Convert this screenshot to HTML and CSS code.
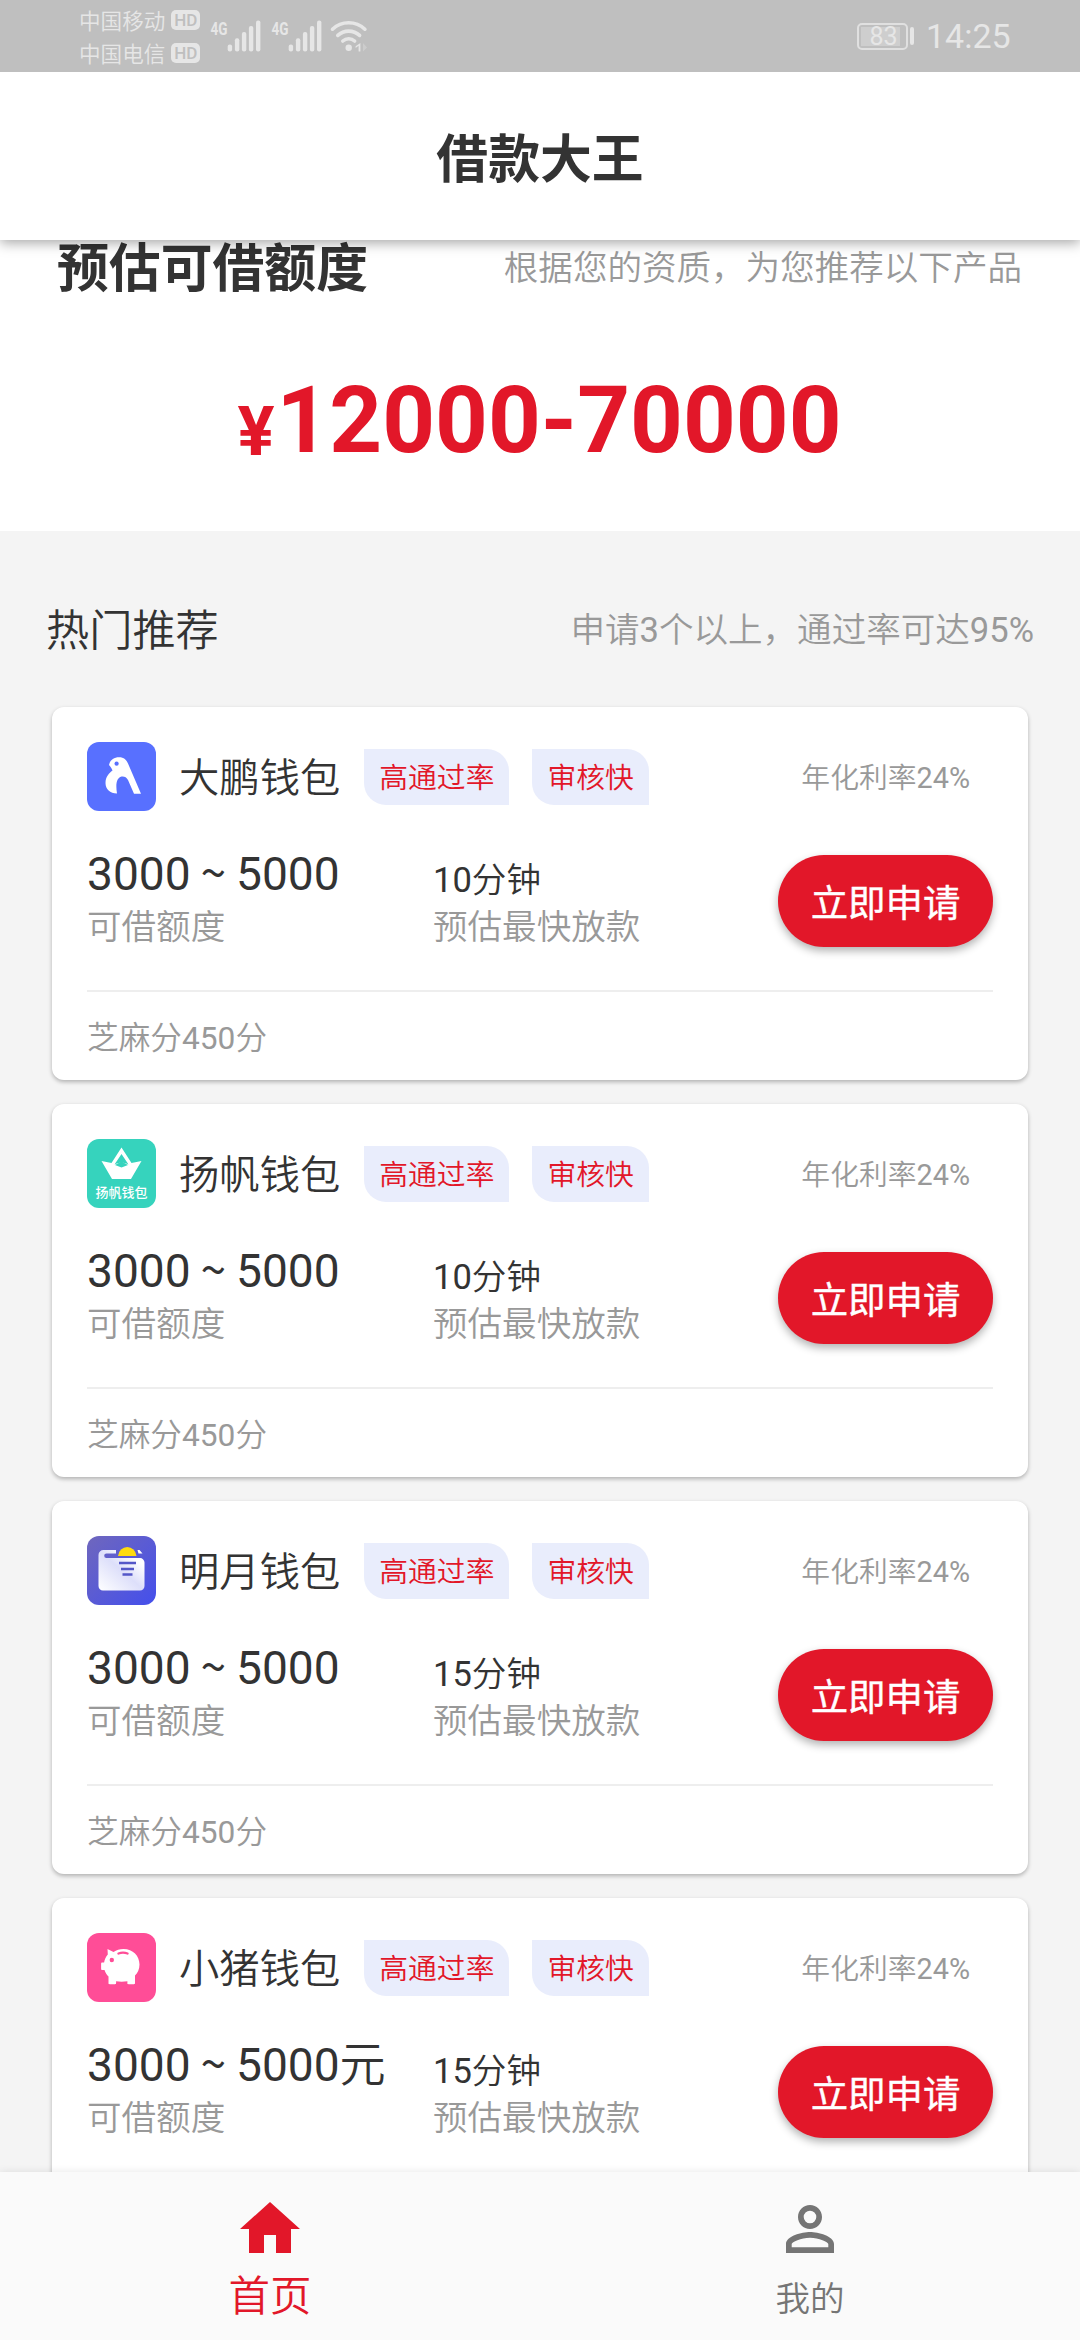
FILE: index.html
```html
<!DOCTYPE html>
<html lang="zh-CN">
<head>
<meta charset="utf-8">
<title>借款大王</title>
<link rel="stylesheet" href="styles.css">
</head>
<body>
<div class="app">
  <div class="status">
    <div class="carriers">
      <div class="carrier">中国移动<span class="hd">HD</span></div>
      <div class="carrier">中国电信<span class="hd">HD</span></div>
    </div>
    <svg class="signals" width="166" height="72" viewBox="0 0 166 72">
      <text class="net" x="5.5" y="35" textLength="17" lengthAdjust="spacingAndGlyphs">4G</text>
      <text class="net" x="66.5" y="35" textLength="17" lengthAdjust="spacingAndGlyphs">4G</text>
      <g fill="currentColor">
        <g id="bars">
          <rect x="22.7" y="44.5" width="4.4" height="7" rx="2"/>
          <rect x="29.9" y="38.3" width="4.4" height="13.2" rx="2"/>
          <rect x="36.9" y="32" width="4.4" height="19.5" rx="2"/>
          <rect x="43.9" y="26" width="4.4" height="25.5" rx="2"/>
          <rect x="51" y="20.5" width="4.4" height="31" rx="2"/>
        </g>
        <use href="#bars" x="61"/>
        <circle cx="143.7" cy="47.7" r="3.2"/>
        <path d="M155.400 43v8.500h-1.800v-5.800l-3 2.300v-1.800z"/>
        <path d="M158 43l4 4.500-4 4z" opacity=".35"/>
      </g>
      <g fill="none" stroke="currentColor" stroke-width="3.6" stroke-linecap="round">
        <path d="M127.5 29.2a23.5 23.5 0 0 1 32.4 0"/>
        <path d="M132.8 35.4a16 16 0 0 1 21.8 0"/>
        <path d="M137.8 41a9 9 0 0 1 11.8 0"/>
      </g>
    </svg>
    <div class="battery"><span class="level">83</span></div>
    <div class="tip"></div>
    <div class="clock">14:25</div>
  </div>
  <header class="header">借款大王</header>
  <main class="main">
    <section class="quota">
      <div class="quota-head">
        <h2 class="quota-title">预估可借额度</h2>
        <span class="note">根据您的资质，为您推荐以下产品</span>
      </div>
      <div class="amount"><span class="yen">¥</span>12000-70000</div>
    </section>
    <div class="hot">
      <h3 class="hot-title">热门推荐</h3>
      <span class="note">申请<b>3</b>个以上，通过率可达<b>95%</b></span>
    </div>
    <div class="list">
      <article class="card">
        <div class="top">
          <svg class="logo" viewBox="0 0 69 69"><rect width="69" height="69" rx="12" fill="#5870ff"/><path d="M22 23C23 18 27 15.300 32 15.300c5 0 7.500 2.700 9 6.200l13 30.200h-7L41 38c-1.500-3-4-4-6.500-3.500-5 1.500-6 7.500-4.500 17-7 0-11.500-4.500-11.500-10.500s3.500-10 7-12.500c-1-2-1.500-3.500-3.500-5.500z" fill="#fff"/><circle cx="29.600" cy="21.700" r="2.100" fill="#5870ff"/></svg>
          <span class="name">大鹏钱包</span><span class="tag">高通过率</span><span class="tag">审核快</span><span class="rate">年化利率<b>24%</b></span>
        </div>
        <div class="mid">
          <div class="limit"><div class="range">3000 <i class="to">~</i> 5000</div><div class="label">可借额度</div></div>
          <div class="speed"><div class="time"><b>10</b>分钟</div><div class="label">预估最快放款</div></div>
          <button class="apply">立即申请</button>
        </div>
        <div class="foot">芝麻分<b>450</b>分</div>
      </article>
      <article class="card">
        <div class="top">
          <svg class="logo" viewBox="0 0 69 69"><rect width="69" height="69" rx="12" fill="#36d3bd"/><path fill-rule="evenodd" d="M14.500 22l10 2L34.500 8.500 44.500 24l10-2-10.500 18H25zM27.500 25.500c4-2.500 10-2.500 14 0L34.500 15z" fill="#fff"/><path d="M28 26l6.500-3.500L41 26l-6.500 2.500z" fill="#36d3bd"/><text x="34.500" y="58" text-anchor="middle" class="logo-text">扬帆钱包</text></svg>
          <span class="name">扬帆钱包</span><span class="tag">高通过率</span><span class="tag">审核快</span><span class="rate">年化利率<b>24%</b></span>
        </div>
        <div class="mid">
          <div class="limit"><div class="range">3000 <i class="to">~</i> 5000</div><div class="label">可借额度</div></div>
          <div class="speed"><div class="time"><b>10</b>分钟</div><div class="label">预估最快放款</div></div>
          <button class="apply">立即申请</button>
        </div>
        <div class="foot">芝麻分<b>450</b>分</div>
      </article>
      <article class="card">
        <div class="top">
          <svg class="logo" viewBox="0 0 69 69"><defs><linearGradient id="moon" x1="0" y1="0" x2="1" y2="1"><stop offset="0" stop-color="#6f67bd"/><stop offset="1" stop-color="#444fec"/></linearGradient><linearGradient id="bag" x1="1" y1="0" x2="0" y2="1"><stop offset=".2" stop-color="#fff"/><stop offset=".5" stop-color="#dddffa"/><stop offset="1" stop-color="#fff"/></linearGradient></defs><rect width="69" height="69" rx="12" fill="url(#moon)"/><path d="M16.500 14H29v3.500H19.500a2.300 2.300 0 0 0 0 4.600H53a4.500 4.500 0 0 1 4.500 4.500V50a4.500 4.500 0 0 1-4.500 4.500H16a4.500 4.500 0 0 1-4.500-4.500V19a5 5 0 0 1 5-5zM50.500 14h2l3 3.500h-4z" fill="url(#bag)"/><path d="M31 20a9.300 10 0 0 1 18.500 0z" fill="#ffdc0e"/><path d="M32 27h17M34 33h13M35.500 38.500h10" stroke="#5457c8" stroke-width="2.500"/></svg>
          <span class="name">明月钱包</span><span class="tag">高通过率</span><span class="tag">审核快</span><span class="rate">年化利率<b>24%</b></span>
        </div>
        <div class="mid">
          <div class="limit"><div class="range">3000 <i class="to">~</i> 5000</div><div class="label">可借额度</div></div>
          <div class="speed"><div class="time"><b>15</b>分钟</div><div class="label">预估最快放款</div></div>
          <button class="apply">立即申请</button>
        </div>
        <div class="foot">芝麻分<b>450</b>分</div>
      </article>
      <article class="card">
        <div class="top">
          <svg class="logo" viewBox="0 0 69 69"><rect width="69" height="69" rx="12" fill="#ff4d97"/><path d="M20.500 16l6 3c3-2 6-3 10-3C46 16 52.500 23 52.500 31.500c0 5-2 8.500-4.500 11V50c0 .8-.4 1.200-1.200 1.200h-5.200c-.8 0-1.200-.4-1.200-1.200v-1.700c-4 .6-7.500.6-11.300 0V50c0 .8-.4 1.200-1.200 1.200h-5.200c-.8 0-1.200-.4-1.200-1.200v-6.500c-1.700-1.700-3-3.700-4-6.500h-2.200c-.8 0-1.200-.4-1.200-1.200v-5c0-.8.400-1.200 1.200-1.200h1.800c.5-3.200 1.700-5.700 3.700-8z" fill="#fff"/><circle cx="24.800" cy="27" r="2.200" fill="#ff4d97"/><path d="M31.500 20.500c3-1.200 6-1.200 9 0" fill="none" stroke="#ff4d97" stroke-width="2.400" stroke-linecap="round"/></svg>
          <span class="name">小猪钱包</span><span class="tag">高通过率</span><span class="tag">审核快</span><span class="rate">年化利率<b>24%</b></span>
        </div>
        <div class="mid">
          <div class="limit"><div class="range">3000 <i class="to">~</i> 5000<i class="unit">元</i></div><div class="label">可借额度</div></div>
          <div class="speed"><div class="time"><b>15</b>分钟</div><div class="label">预估最快放款</div></div>
          <button class="apply">立即申请</button>
        </div>
      </article>
    </div>
  </main>
  <nav class="nav">
    <a class="tab active"><svg width="72" height="72" viewBox="0 0 24 24" fill="currentColor"><path d="M10 20v-6h4v6h5v-8h3L12 3 2 12h3v8z"/></svg><span>首页</span></a>
    <a class="tab"><svg width="72" height="72" viewBox="0 0 24 24" fill="currentColor"><path d="M12 5.900a2.100 2.100 0 1 1 0 4.200 2.100 2.100 0 0 1 0-4.200m0 9c2.970 0 6.100 1.460 6.100 2.100v1.100H5.900V17c0-.64 3.130-2.100 6.100-2.100M12 4C9.790 4 8 5.790 8 8s1.790 4 4 4 4-1.790 4-4-1.790-4-4-4zm0 9c-2.670 0-8 1.340-8 4v3h16v-3c0-2.660-5.330-4-8-4z"/></svg><span>我的</span></a>
  </nav>
</div>
</body>
</html>
```
FILE: styles.css
```css
* { box-sizing: border-box; }
body {
  margin: 0;
  font-family: Roboto, "Noto Sans CJK SC", sans-serif;
  font-weight: 350;
  color: #333;
}
b { font-weight: 400; }
i { font-style: normal; font-family: "Noto Sans CJK SC", sans-serif; line-height: 1; }
h2, h3 { margin: 0; }
.app {
  width: 1080px;
  height: 2340px;
  overflow: hidden;
  display: flex;
  flex-direction: column;
  background: #f4f4f4;
}

/* status bar */
.status {
  flex: none;
  position: relative;
  z-index: 2;
  height: 72px;
  background: #bfbfbf;
  color: #e6e6e6;
  display: flex;
  align-items: center;
  padding-left: 79px;
}
.carriers { width: 126px; display: flex; flex-direction: column; gap: 1px; }
.carrier { display: flex; align-items: center; height: 32px; font-size: 21.6px; white-space: nowrap; }
.hd {
  width: 29px;
  height: 20px;
  margin-left: 6px;
  border-radius: 5px;
  background: #e6e6e6;
  color: #bfbfbf;
  font: 500 17px/20px Roboto, sans-serif;
  text-align: center;
}
.net { font: 700 19px Roboto, sans-serif; fill: currentColor; }
.battery {
  width: 51px;
  height: 27px;
  margin-left: 486px;
  padding: 2px;
  border: 2px solid #e0e0e0;
  border-radius: 5px;
}
.level {
  display: block;
  width: 39px;
  height: 19px;
  background: #cecece;
  font: 400 25px/19px Roboto, sans-serif;
  text-align: center;
  padding-left: 6px;
}
.tip { width: 4px; height: 18px; margin-left: 2px; border-radius: 2px; background: #e6e6e6; }
.clock { margin-left: 12px; font: 400 34px/40px Roboto, sans-serif; }

/* title bar */
.header {
  flex: none;
  position: relative;
  z-index: 1;
  height: 168px;
  background: #fff;
  box-shadow: 0 3px 12px rgba(0, 0, 0, .35);
  font-size: 51.84px;
  font-weight: 700;
  line-height: 178px;
  text-align: center;
}

/* quota */
.main { flex: 1; min-height: 0; overflow: hidden; }
.quota { height: 291px; background: #fff; }
.quota-head {
  display: flex;
  justify-content: space-between;
  align-items: flex-start;
  height: 57px;
  padding: 0 58px 0 57px;
}
.quota-title { font-size: 51.84px; line-height: 60px; }
.note { font-size: 34.56px; color: #999; line-height: 40px; }
.quota-head .note { margin-top: 8px; }
.amount {
  margin-top: 70px;
  padding-right: 1px;
  font-size: 92.16px;
  font-weight: 700;
  line-height: 108px;
  text-align: center;
  color: #e21729;
}
.yen { margin-right: 2px; font-size: 69.12px; position: relative; top: 3px; }

.hot {
  display: flex;
  justify-content: space-between;
  align-items: center;
  height: 176px;
  padding: 22px 46px 0 46px;
}
.hot-title { margin-top: -6px; font-size: 43.2px; font-weight: 350; }

/* product cards */
.list { display: flex; flex-direction: column; gap: 24px; padding: 0 52px; }
.card {
  flex: none;
  height: 373px;
  padding: 35px 35px 0;
  border-radius: 12px;
  background: #fff;
  box-shadow: 0 2px 4px rgba(0, 0, 0, .28);
}
.top { display: flex; align-items: center; height: 69px; }
.logo { width: 69px; height: 69px; flex: none; }
.logo-text { font: 500 13px "Noto Sans CJK SC", sans-serif; fill: #fff; }
.name { margin: -4px 1px 0 23px; font-size: 40.32px; }
.tag {
  height: 56px;
  margin-left: 23px;
  padding: 0 15px;
  border-radius: 0 22px 0 22px;
  background: #e9edfc;
  color: #e21729;
  font-size: 28.8px;
  line-height: 58px;
}
.rate { margin: -2px 0 0 auto; padding-right: 23px; font-size: 28.8px; color: #999; }
.mid { display: flex; height: 146px; }
.limit { width: 346px; }
.range { height: 56px; margin-top: 35px; font-size: 46.08px; font-weight: 400; line-height: 56px; white-space: nowrap; }
.to { margin: 0 -1.5px; }
.unit { font-weight: 350; }
.label { font-size: 34.56px; color: #999; line-height: 50px; }
.time { margin-top: 48px; font-size: 34.56px; line-height: 43px; }
.apply {
  margin: 44px 0 0 auto;
  width: 215px;
  height: 92px;
  padding: 0;
  border: 0;
  border-radius: 46px;
  background: #e21729;
  box-shadow: 0 4px 8px rgba(0, 0, 0, .3);
  color: #fff;
  font: 400 37.44px Roboto, "Noto Sans CJK SC", sans-serif;
  -webkit-text-stroke: .4px #fff;
}
.foot {
  margin-top: 33px;
  border-top: 2px solid #eee;
  padding-top: 2px;
  font-size: 31.68px;
  line-height: 90px;
  color: #999;
}

/* bottom tabs */
.nav {
  flex: none;
  position: relative;
  z-index: 1;
  display: flex;
  height: 168px;
  background: #fafafa;
  box-shadow: 0 0 8px rgba(0, 0, 0, .1);
}
.tab {
  flex: 1;
  display: flex;
  flex-direction: column;
  align-items: center;
  padding-top: 21px;
  color: #757575;
  font-size: 34.56px;
  line-height: 68px;
}
.tab.active { color: #e21729; font-size: 41.5px; line-height: 63px; }
```
